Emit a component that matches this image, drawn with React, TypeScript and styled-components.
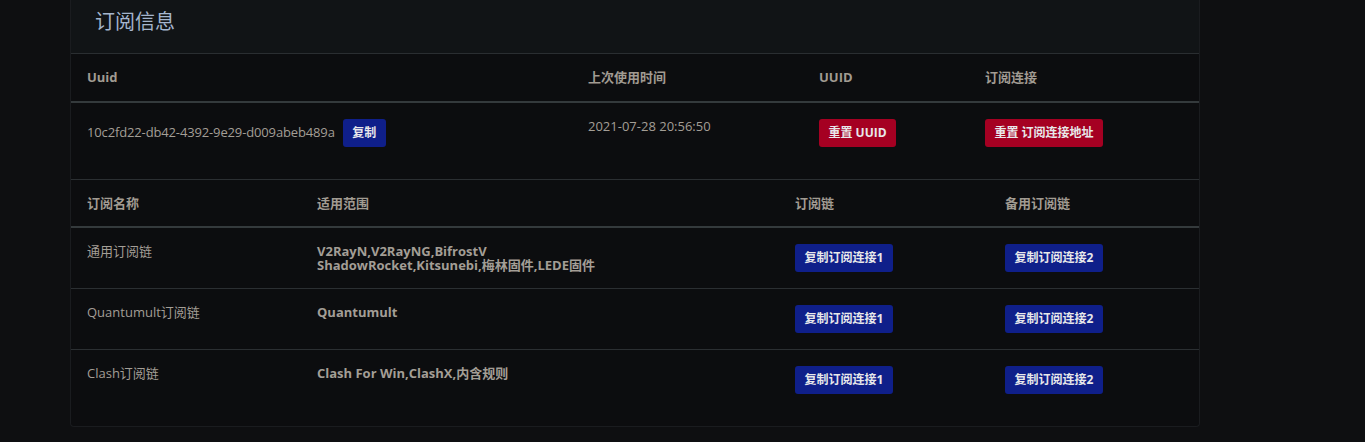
import React from "react";
import styled, { createGlobalStyle } from "styled-components";

const Global = createGlobalStyle`
  html, body { margin: 0; padding: 0; background: #0e0f11; }
  body { font-family: "Open Sans", "Noto Sans CJK SC", sans-serif; }
  * { box-sizing: border-box; }
`;

const Page = styled.div`
  min-height: 442px;
  padding-left: 70px;
  background: #0e0f11;
`;

const Card = styled.section`
  width: 1130px;
  background: #0c0d0f;
  border: 1px solid #1a1c1f;
  border-top: none;
  border-radius: 0 0 4px 4px;
  padding-bottom: 16px;
`;

const CardHeader = styled.header`
  background: #111416;
  border-bottom: 1px solid #2a2e31;
  padding: 8px 24px 17px;
  height: 54px;
`;

const Title = styled.h3`
  margin: 0;
  font-size: 20px;
  line-height: 28px;
  font-weight: 400;
  color: #a4b5cd;
`;

const Table = styled.table`
  width: 1128px;
  table-layout: fixed;
  border-collapse: collapse;
  margin-bottom: 16px;
  &:last-child { margin-bottom: 0; }
`;

const Th = styled.th<{ $top?: boolean }>`
  text-align: left;
  font-size: 13px;
  font-weight: 700;
  line-height: 15px;
  color: #a19b92;
  padding: 16px 16px ${(p) => (p.$top ? "15px" : "16px")};
  border-top: ${(p) => (p.$top ? "1px solid #2b2f32" : "none")};
  border-bottom: 2px solid #343a3c;
  vertical-align: top;
`;

const Tr = styled.tr`
  border-bottom: 1px solid #2b2f32;
  &:last-child { border-bottom: none; }
`;

const Td = styled.td<{ $bold?: boolean }>`
  padding: 16px;
  font-size: 13px;
  line-height: 14px;
  font-weight: ${(p) => (p.$bold ? 700 : 400)};
  color: #a39e96;
  vertical-align: top;
`;

const Button = styled.button<{ $tone: "blue" | "red" }>`
  display: inline-block;
  height: 28px;
  padding: 0 9.5px;
  border: none;
  border-radius: 3px;
  background: ${(p) => (p.$tone === "blue" ? "#0f1f8a" : "#a50022")};
  color: #e8e8ea;
  font-family: "Open Sans", "Noto Sans CJK SC", sans-serif;
  font-size: 12px;
  font-weight: 700;
  line-height: 28px;
  vertical-align: baseline;
  cursor: pointer;
`;

const Uuid = styled.span`
  margin-right: 8px;
  letter-spacing: -0.14px;
`;

const subs = [
  { name: "通用订阅链", scope: ["V2RayN,V2RayNG,BifrostV", "ShadowRocket,Kitsunebi,梅林固件,LEDE固件"] },
  { name: "Quantumult订阅链", scope: ["Quantumult"] },
  { name: "Clash订阅链", scope: ["Clash For Win,ClashX,内含规则"] },
];

export default function App() {
  return (
    <>
      <Global />
      <Page>
        <Card>
          <CardHeader>
            <Title>订阅信息</Title>
          </CardHeader>
          <Table>
            <colgroup>
              <col style={{ width: 501 }} />
              <col style={{ width: 231 }} />
              <col style={{ width: 166 }} />
              <col style={{ width: 230 }} />
            </colgroup>
            <thead>
              <tr>
                <Th>Uuid</Th>
                <Th>上次使用时间</Th>
                <Th>UUID</Th>
                <Th>订阅连接</Th>
              </tr>
            </thead>
            <tbody>
              <Tr>
                <Td>
                  <Uuid>10c2fd22-db42-4392-9e29-d009abeb489a</Uuid>
                  <Button $tone="blue">复制</Button>
                </Td>
                <Td>2021-07-28 20:56:50</Td>
                <Td>
                  <Button $tone="red">重置 UUID</Button>
                </Td>
                <Td>
                  <Button $tone="red">重置 订阅连接地址</Button>
                </Td>
              </Tr>
            </tbody>
          </Table>
          <Table>
            <colgroup>
              <col style={{ width: 230 }} />
              <col style={{ width: 478 }} />
              <col style={{ width: 210 }} />
              <col style={{ width: 210 }} />
            </colgroup>
            <thead>
              <tr>
                <Th $top>订阅名称</Th>
                <Th $top>适用范围</Th>
                <Th $top>订阅链</Th>
                <Th $top>备用订阅链</Th>
              </tr>
            </thead>
            <tbody>
              {subs.map((s) => (
                <Tr key={s.name}>
                  <Td>{s.name}</Td>
                  <Td $bold>
                    {s.scope.map((line, i) => (
                      <React.Fragment key={line}>
                        {i > 0 && <br />}
                        {line}
                      </React.Fragment>
                    ))}
                  </Td>
                  <Td>
                    <Button $tone="blue">复制订阅连接1</Button>
                  </Td>
                  <Td>
                    <Button $tone="blue">复制订阅连接2</Button>
                  </Td>
                </Tr>
              ))}
            </tbody>
          </Table>
        </Card>
      </Page>
    </>
  );
}
